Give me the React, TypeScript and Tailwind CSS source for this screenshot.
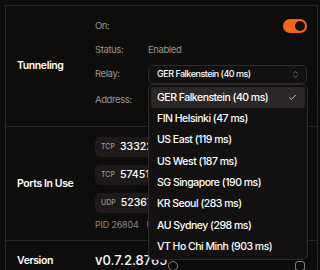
import React from 'react';
import { Check, ChevronsUpDown } from 'lucide-react';

const relays = [
  'GER Falkenstein (40 ms)',
  'FIN Helsinki (47 ms)',
  'US East (119 ms)',
  'US West (187 ms)',
  'SG Singapore (190 ms)',
  'KR Seoul (283 ms)',
  'AU Sydney (298 ms)',
  'VT Ho Chi Minh (903 ms)',
];

const ports = [
  { proto: 'TCP', port: '33322' },
  { proto: 'TCP', port: '57451' },
  { proto: 'UDP', port: '52367' },
];

const App: React.FC = () => {
  return (
    <div
      className="w-[320px] h-[270px] overflow-hidden bg-[#0f0d0c] pl-[5px] pt-[5px] text-white"
      style={{ fontFamily: 'Inter, "Noto Sans", sans-serif' }}
    >
      <div className="w-[313px] border-l border-t border-r border-[#2a2827]">
        {/* Tunneling */}
        <div className="flex h-[121px] border-b border-[#2a2827]">
          <div className="w-[89px] flex items-center pl-[11px] text-[10.5px] font-semibold tracking-[-0.4px]">Tunneling</div>
          <div className="flex-1 pt-[8px]">
            <div className="grid grid-cols-[53px_159px] text-[9.5px] tracking-[-0.4px]">
              <div className="h-[24px] flex items-center text-[#9a9795]">On:</div>
              <div className="h-[24px] flex items-center justify-end">
                <div className="w-[24px] h-[14px] rounded-full bg-[#f2661c] flex items-center justify-end pr-[2px]">
                  <div className="w-[10px] h-[10px] rounded-full bg-[#141110]" />
                </div>
              </div>
              <div className="h-[24px] flex items-center text-[#9a9795]">Status:</div>
              <div className="h-[24px] flex items-center text-[#9a9795]">Enabled</div>
              <div className="h-[24px] flex items-center text-[#9a9795]">Relay:</div>
              <div className="h-[24px] flex items-center relative">
                <div className="w-full h-[19px] rounded-[5px] border border-[#2e2b2a] bg-[#121010] flex items-center justify-between pl-[8px] pr-[6px]">
                  <span className="text-[9px] tracking-[-0.5px] font-medium whitespace-nowrap">GER Falkenstein (40 ms)</span>
                  <ChevronsUpDown className="w-[9px] h-[9px] text-[#8a8785]" />
                </div>
                <div className="absolute left-0 top-[22px] z-10 w-[160px] h-[176px] rounded-[6px] border border-[#2e2b2a] bg-[#121010] p-[2px] shadow-lg">
                  {relays.map((r, i) => (
                    <div
                      key={r}
                      className={
                        'h-[21.3px] flex items-center justify-between pl-[6px] pr-[8px] rounded-[4px] text-[10.5px] tracking-[-0.5px] font-medium whitespace-nowrap ' +
                        (i === 0 ? 'bg-[#2a2726]' : '')
                      }
                    >
                      <span>{r}</span>
                      {i === 0 && <Check className="w-[9px] h-[9px] text-[#c9c6c4]" strokeWidth={2.5} />}
                    </div>
                  ))}
                </div>
              </div>
              <div className="h-[28px] flex items-center text-[#9a9795]">Address:</div>
              <div className="h-[28px]" />
            </div>
          </div>
        </div>

        {/* Ports */}
        <div className="flex h-[114px] border-b border-[#2a2827]">
          <div className="w-[89px] flex items-center pl-[11px] text-[10.5px] font-semibold tracking-[-0.4px]">Ports In Use</div>
          <div className="flex-1 pt-[10px] flex flex-col items-start gap-[8px]">
            {ports.map((p) => (
              <div key={p.port} className="h-[20px] flex items-center gap-[5px] rounded-[5px] bg-[#1d1a19] pl-[6px] pr-[10px]">
                <span className="text-[7px] font-medium text-[#9a9795]">{p.proto}</span>
                <span className="text-[10.5px] font-medium">{p.port}</span>
              </div>
            ))}
            <div className="flex gap-[8px] text-[9px] tracking-[-0.2px] text-[#8a8785] -mt-[3px]">
              <span>PID 26804</span>
              <span>Uptime</span>
            </div>
          </div>
        </div>

        {/* Version */}
        <div className="flex h-[40px]">
          <div className="w-[89px] flex items-center pl-[11px] text-[10.5px] font-semibold tracking-[-0.4px]">Version</div>
          <div className="flex-1 flex items-center text-[13px] font-medium pr-[12px]">
            <span>v0.7.2.8765</span>
            <span className="ml-[1px] w-[10px] h-[10px] rounded-full border border-[#8a8785] mt-[9px]" />
            <span className="ml-auto w-[10px] h-[10px] rounded-[3px] border border-[#8a8785] mt-[10px]" />
          </div>
        </div>
      </div>
    </div>
  );
};

export default App;
